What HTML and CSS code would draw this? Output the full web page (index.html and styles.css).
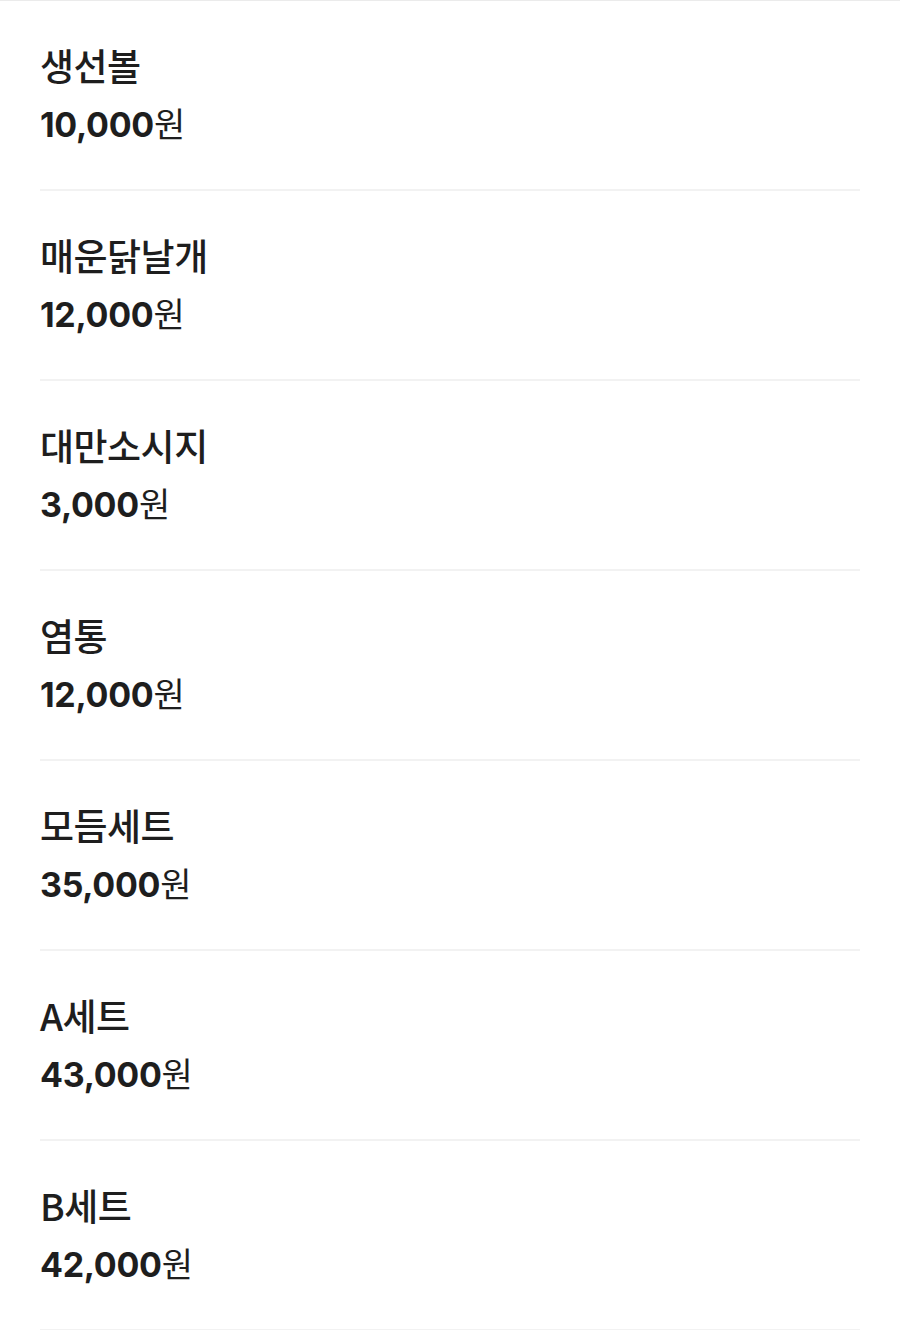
FILE: index.html
```html
<!DOCTYPE html>
<html lang="ko">
<head>
    <meta charset="UTF-8">
    <meta name="viewport" content="width=device-width, initial-scale=1.0">
    <title>메뉴</title>
    <link rel="stylesheet" href="styles.css">
</head>
<body>
    <!-- Menu list -->
    <ul class="menu-list">
        <li class="menu-item">
            <p class="menu-name">생선볼</p>
            <p class="menu-price">10,000<span class="won">원</span></p>
        </li>
        <li class="menu-item">
            <p class="menu-name">매운닭날개</p>
            <p class="menu-price">12,000<span class="won">원</span></p>
        </li>
        <li class="menu-item">
            <p class="menu-name">대만소시지</p>
            <p class="menu-price">3,000<span class="won">원</span></p>
        </li>
        <li class="menu-item">
            <p class="menu-name">염통</p>
            <p class="menu-price">12,000<span class="won">원</span></p>
        </li>
        <li class="menu-item">
            <p class="menu-name">모듬세트</p>
            <p class="menu-price">35,000<span class="won">원</span></p>
        </li>
        <li class="menu-item">
            <p class="menu-name">A세트</p>
            <p class="menu-price">43,000<span class="won">원</span></p>
        </li>
        <li class="menu-item">
            <p class="menu-name">B세트</p>
            <p class="menu-price">42,000<span class="won">원</span></p>
        </li>
    </ul>
</body>
</html>
```

FILE: styles.css
```css
/* General Styling */
body {
    margin: 0;
    background: #ffffff;
    color: #1e1e1e;
    font-family: Inter, "Noto Sans CJK KR", sans-serif;
    border-top: 1px solid #ebebeb;
}

.menu-list {
    list-style: none;
    margin: 0;
    padding: 0 40px;
}

.menu-item {
    padding: 34px 0 34px;
    border-bottom: 2px solid #f2f2f2;
    height: 120px;
}

.menu-name {
    margin: 0;
    font-family: "Noto Sans CJK KR", sans-serif;
    font-size: 37px;
    font-weight: 500;
    line-height: 60px;
    height: 60px;
    letter-spacing: -0.5px;
}

.menu-price {
    margin: 0;
    font-size: 34px;
    font-weight: 700;
    line-height: 60px;
    height: 60px;
    letter-spacing: -0.3px;
}

.menu-price .won {
    font-family: "Noto Sans CJK KR", sans-serif;
    font-weight: 400;
    font-size: 34px;
    line-height: 1;
}
```
